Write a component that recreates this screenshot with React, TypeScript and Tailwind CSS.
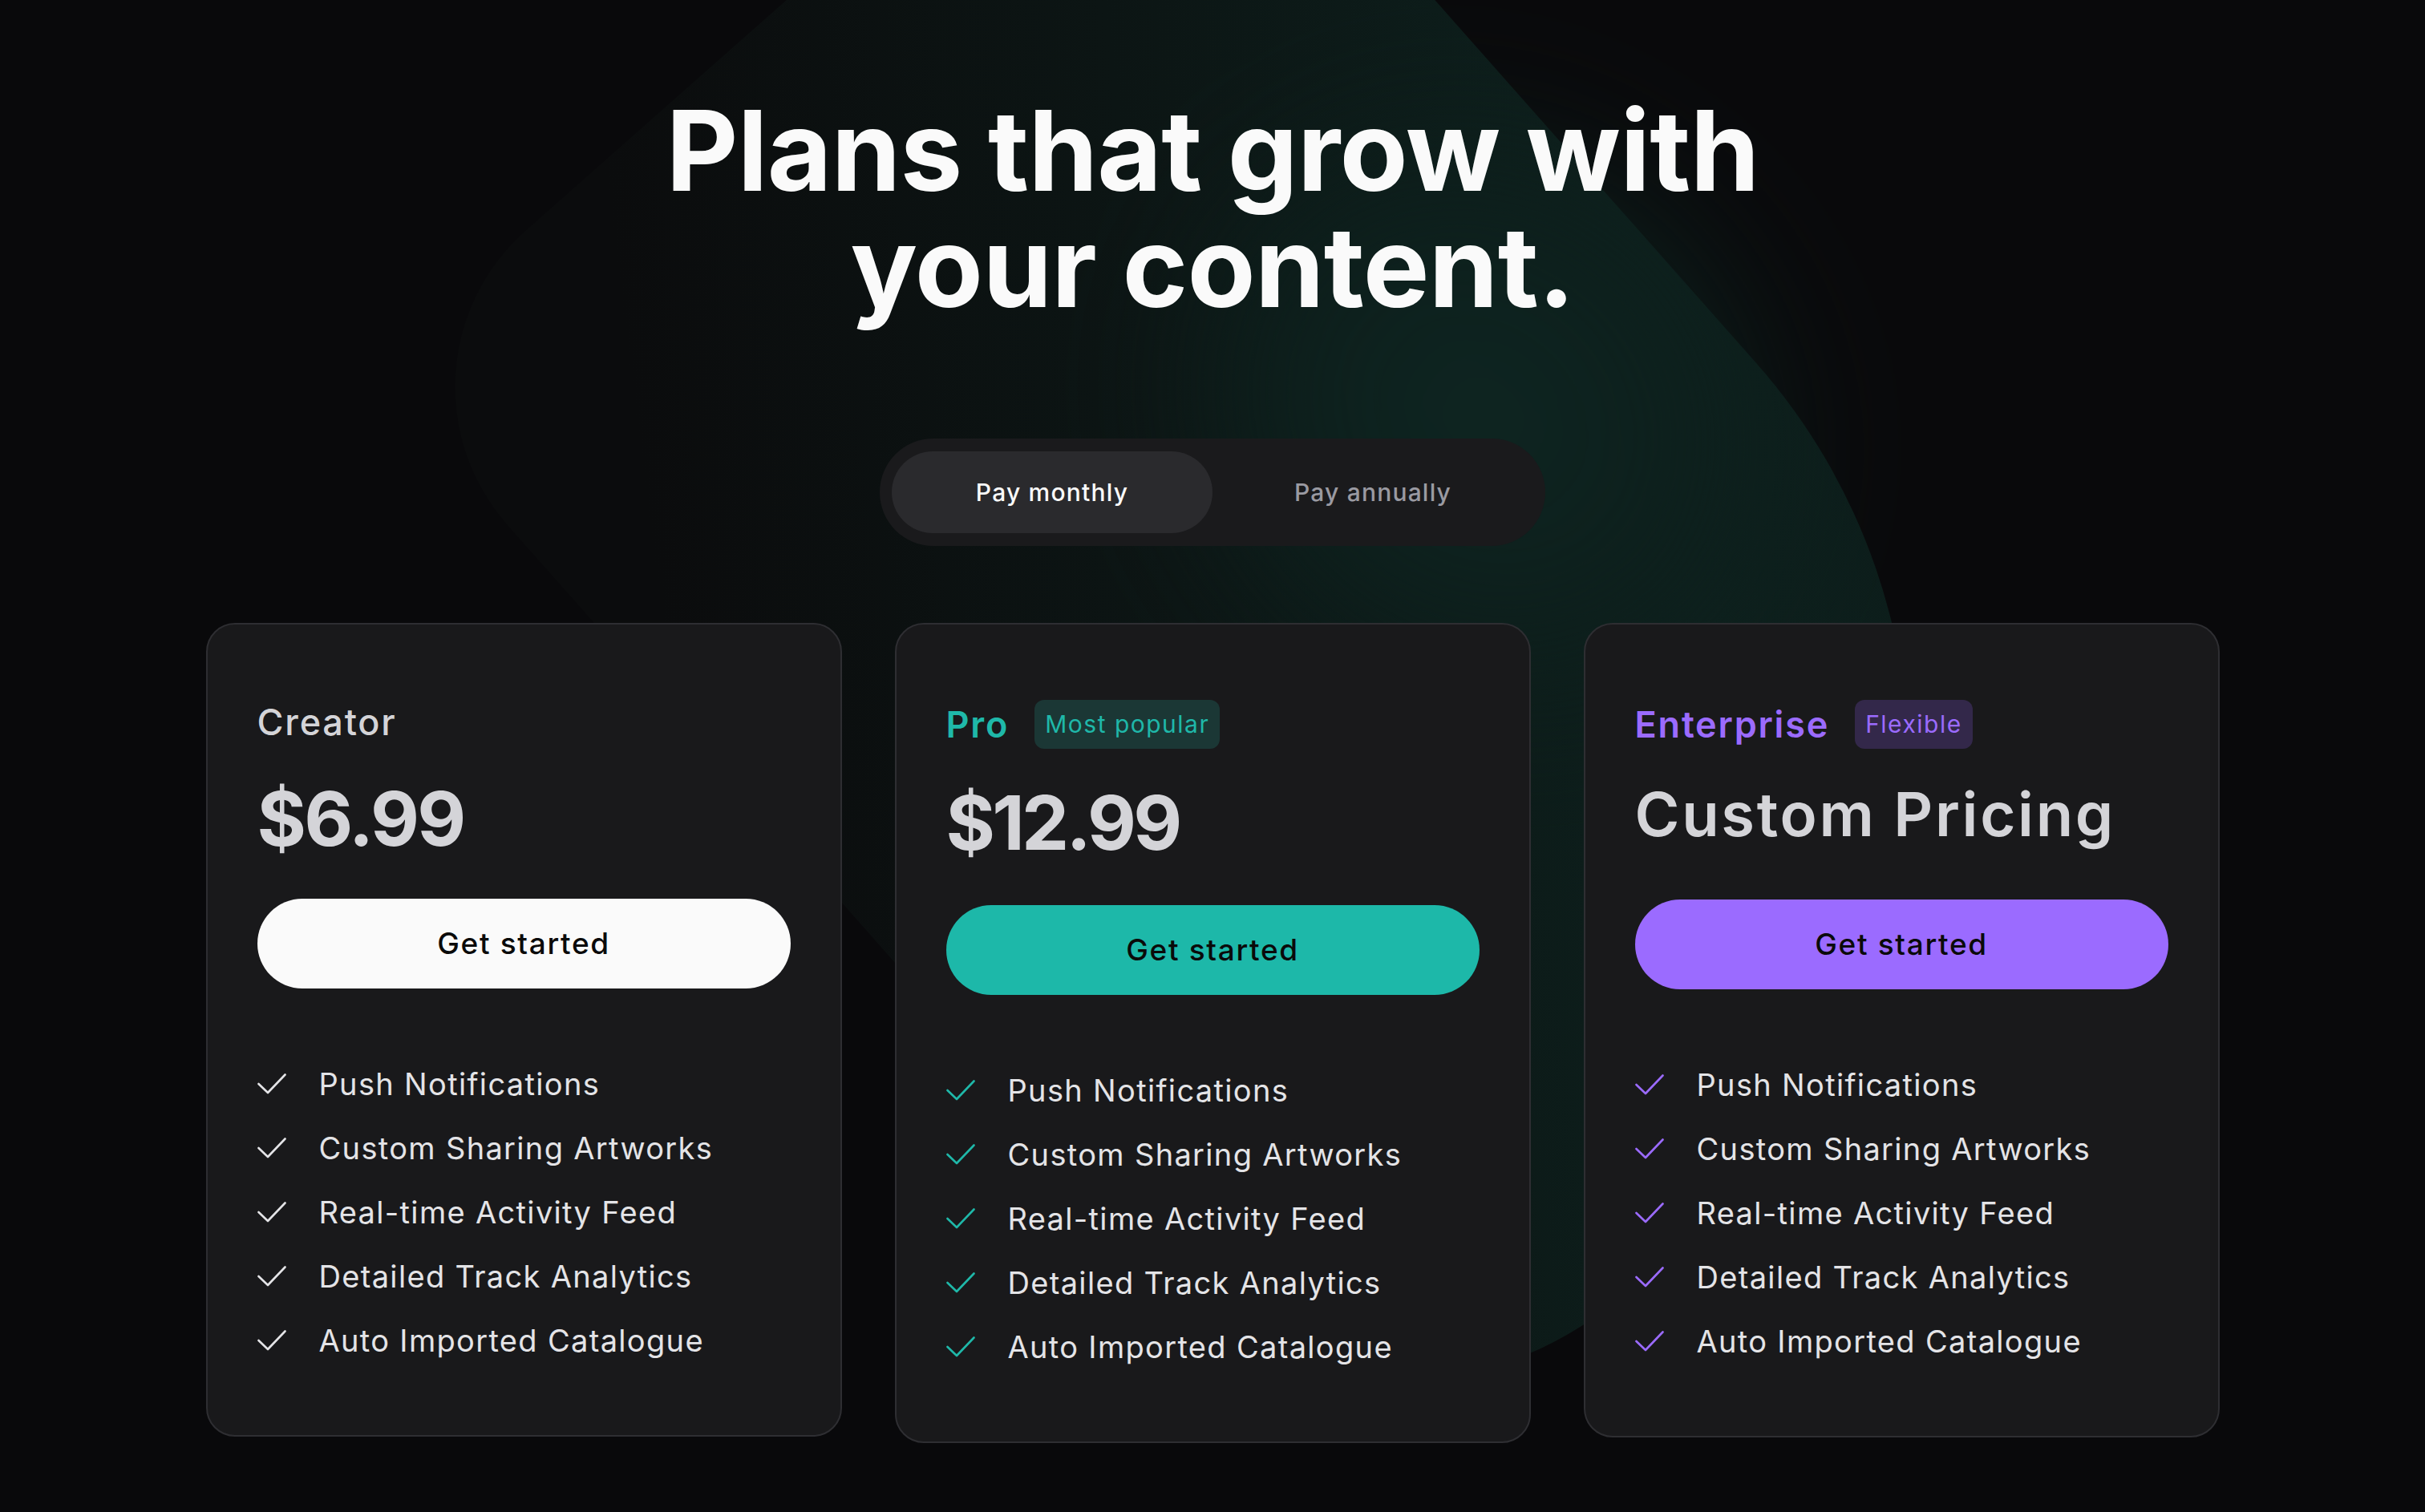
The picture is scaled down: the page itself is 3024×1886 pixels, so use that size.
type Plan = {
  name: string;
  nameClass: string;
  badge?: string;
  badgeClass?: string;
  price: string;
  priceClass: string;
  buttonClass: string;
  checkClass: string;
};

const features = [
  'Push Notifications',
  'Custom Sharing Artworks',
  'Real-time Activity Feed',
  'Detailed Track Analytics',
  'Auto Imported Catalogue',
];

const plans: Plan[] = [
  {
    name: 'Creator',
    nameClass: 'text-[#d4d4d8] font-medium',
    price: '$6.99',
    priceClass: 'mt-[45px] mb-[53px] text-[94px] font-bold tracking-[-0.03em]',
    buttonClass: 'bg-[#fafafa]',
    checkClass: 'text-[#e4e4e7]',
  },
  {
    name: 'Pro',
    nameClass: 'text-[#1fb8a9] font-semibold',
    badge: 'Most popular',
    badgeClass: 'bg-[#1b3735] text-[#1fb8a9]',
    price: '$12.99',
    priceClass: 'mt-[45px] mb-[56px] text-[94px] font-bold tracking-[-0.04em]',
    buttonClass: 'bg-[#1db8a9]',
    checkClass: 'text-[#1fb8a9]',
  },
  {
    name: 'Enterprise',
    nameClass: 'text-[#9b6bff] font-semibold',
    badge: 'Flexible',
    badgeClass: 'bg-[#33284a] text-[#9b6bff]',
    price: 'Custom Pricing',
    priceClass: 'mt-[43px] mb-[69px] text-[76px] font-semibold tracking-[0.035em]',
    buttonClass: 'bg-[#9b6bff]',
    checkClass: 'text-[#9b6bff]',
  },
];

function CheckMark({ className }: { className: string }) {
  return (
    <svg viewBox="0 0 36 26" className={`h-[26px] w-[36px] shrink-0 ${className}`} fill="none">
      <polyline
        points="1.5,13 13,24 34.5,1.5"
        stroke="currentColor"
        strokeWidth="2.6"
        strokeLinecap="round"
        strokeLinejoin="round"
      />
    </svg>
  );
}

function PlanCard({ plan }: { plan: Plan }) {
  return (
    <div className="rounded-[36px] border-2 border-[#2e2e32] bg-[#19191b] px-[62px] pt-[94px] pb-[94px]">
      {/* Header */}
      <div className={plan.badge ? 'flex h-[61px] items-center gap-[32px]' : 'flex h-[56px] items-center'}>
        <span className={`text-[45px] leading-[56px] tracking-[0.04em] ${plan.nameClass}`}>{plan.name}</span>
        {plan.badge && (
          <span className={`flex h-[61px] items-center rounded-[12px] px-[13px] text-[30px] tracking-[0.05em] ${plan.badgeClass}`}>
            {plan.badge}
          </span>
        )}
      </div>

      <div className={`leading-none text-[#d4d4d8] ${plan.priceClass}`}>{plan.price}</div>

      <button className={`flex h-[112px] w-full items-center justify-center rounded-full text-[37px] font-medium tracking-[0.045em] text-[#0a0a0a] ${plan.buttonClass}`}>
        Get started
      </button>

      <ul className="mt-[95px] flex flex-col gap-[32px]">
        {features.map((f) => (
          <li key={f} className="flex items-center gap-[41px] text-[38px] leading-[48px] tracking-[0.035em] text-[#e4e4e7]">
            <CheckMark className={plan.checkClass} />
            <span>{f}</span>
          </li>
        ))}
      </ul>
    </div>
  );
}

export default function App() {
  return (
    <section
      className="relative min-h-screen overflow-hidden bg-[#09090b] text-white"
      style={{ fontFamily: 'Inter, "Noto Sans", sans-serif' }}
    >
      {/* Background glow: tilted rounded slab, lit from the right */}
      <div className="pointer-events-none absolute left-[627px] top-[91px] h-[1300px] w-[1900px] rotate-[48.5deg] rounded-[500px_760px_400px_260px] bg-[linear-gradient(to_top_right,#0b0c0d_15%,#0c1514_45%,#0d201d_75%,#0c1b19_95%)]" />
      <div className="pointer-events-none absolute left-[1400px] top-[120px] h-[800px] w-[900px] rotate-[40deg] rounded-full bg-[radial-gradient(ellipse_at_center,#0e2723_0%,#0d1f1c_40%,transparent_70%)] blur-[80px]" />

      <div className="relative z-10 flex flex-col items-center pt-[115px]">
        <h1 className="text-center text-[139px] font-bold leading-[145px] tracking-[-0.005em] text-[#fafafa]">
          <span className="block">Plans that grow with</span>
          <span className="block">your content.</span>
        </h1>

        {/* Billing toggle */}
        <div className="mt-[142px] flex h-[134px] w-[830px] items-center rounded-full bg-[#1a1a1c] p-[15px]">
          <button className="flex h-[102px] flex-1 items-center justify-center rounded-full bg-[#2a2a2d] text-[30px] font-medium tracking-[0.04em] text-[#fafafa]">
            Pay monthly
          </button>
          <button className="flex h-[102px] flex-1 items-center justify-center rounded-full text-[30px] font-medium tracking-[0.04em] text-[#9a9aa2]">
            Pay annually
          </button>
        </div>

        {/* Plans */}
        <div className="mt-[96px] grid w-[2511px] grid-cols-3 items-start gap-[66px]">
          {plans.map((p) => (
            <PlanCard key={p.name} plan={p} />
          ))}
        </div>
      </div>
    </section>
  );
}
